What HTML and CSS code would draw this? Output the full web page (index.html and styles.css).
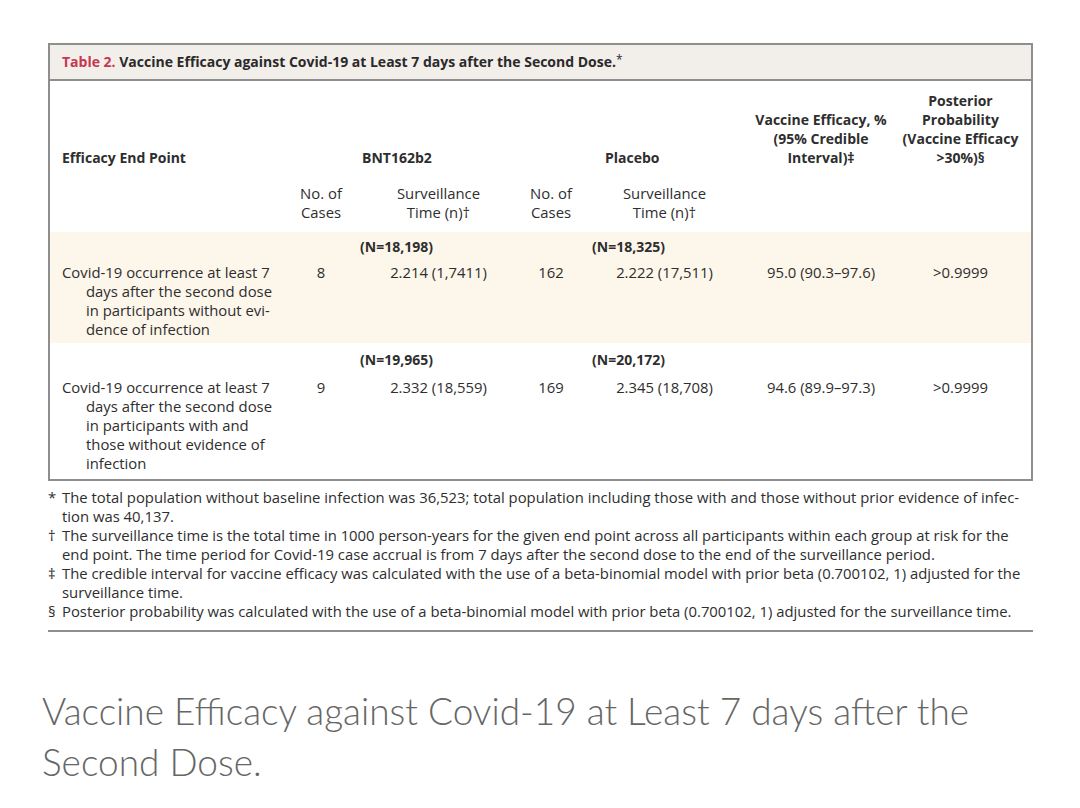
FILE: index.html
```html
<!DOCTYPE html>
<html>
<head>
<meta charset="utf-8">
<link rel="stylesheet" href="styles.css">
</head>
<body>
<div class="page">
  <div class="figure">
    <div class="title"><span class="label">Table 2.</span> Vaccine Efficacy against Covid-19 at Least 7 days after the Second Dose.<sup class="star">*</sup></div>
    <table class="data">
      <colgroup>
        <col class="c1"><col class="c2"><col class="c3"><col class="c4"><col class="c5"><col class="c6"><col class="c7">
      </colgroup>
      <thead>
        <tr class="h1">
          <th class="ep">Efficacy End Point</th>
          <th colspan="2" class="grp grp-b">BNT162b2</th>
          <th colspan="2" class="grp grp-p">Placebo</th>
          <th class="ctr">Vaccine Efficacy, %<br>(95% Credible<br>Interval)‡</th>
          <th class="ctr">Posterior<br>Probability<br>(Vaccine Efficacy<br>&gt;30%)§</th>
        </tr>
        <tr class="h2">
          <th></th>
          <th class="ctr">No. of<br>Cases</th>
          <th class="ctr">Surveillance<br>Time (n)†</th>
          <th class="ctr">No. of<br>Cases</th>
          <th class="ctr">Surveillance<br>Time (n)†</th>
          <th></th>
          <th></th>
        </tr>
      </thead>
      <tbody class="shaded first">
        <tr class="nrow">
          <td></td>
          <td colspan="2" class="n n-b">(N=18,198)</td>
          <td colspan="2" class="n n-p">(N=18,325)</td>
          <td></td><td></td>
        </tr>
        <tr class="drow">
          <td class="ep">Covid-19 occurrence at least 7<br>days after the second dose<br>in participants without evi-<br>dence of infection</td>
          <td class="ctr">8</td>
          <td class="ctr">2.214 (1,7411)</td>
          <td class="ctr">162</td>
          <td class="ctr">2.222 (17,511)</td>
          <td class="ctr">95.0 (90.3–97.6)</td>
          <td class="ctr">&gt;0.9999</td>
        </tr>
      </tbody>
      <tbody class="second">
        <tr class="nrow">
          <td></td>
          <td colspan="2" class="n n-b">(N=19,965)</td>
          <td colspan="2" class="n n-p">(N=20,172)</td>
          <td></td><td></td>
        </tr>
        <tr class="drow">
          <td class="ep">Covid-19 occurrence at least 7<br>days after the second dose<br>in participants with and<br>those without evidence of<br>infection</td>
          <td class="ctr">9</td>
          <td class="ctr">2.332 (18,559)</td>
          <td class="ctr">169</td>
          <td class="ctr">2.345 (18,708)</td>
          <td class="ctr">94.6 (89.9–97.3)</td>
          <td class="ctr">&gt;0.9999</td>
        </tr>
      </tbody>
    </table>
  </div>
  <div class="notes">
    <div class="note"><span class="mark">*</span><span class="ntext">The total population without baseline infection was 36,523; total population including those with and those without prior evidence of infec-<br>tion was 40,137.</span></div>
    <div class="note"><span class="mark">†</span><span class="ntext">The surveillance time is the total time in 1000 person-years for the given end point across all participants within each group at risk for the<br>end point. The time period for Covid-19 case accrual is from 7 days after the second dose to the end of the surveillance period.</span></div>
    <div class="note"><span class="mark">‡</span><span class="ntext">The credible interval for vaccine efficacy was calculated with the use of a beta-binomial model with prior beta (0.700102, 1) adjusted for the<br>surveillance time.</span></div>
    <div class="note"><span class="mark">§</span><span class="ntext">Posterior probability was calculated with the use of a beta-binomial model with prior beta (0.700102, 1) adjusted for the surveillance time.</span></div>
  </div>
  <p class="caption">Vaccine Efficacy against Covid-19 at Least 7 days after the<br>Second Dose.</p>
</div>
</body>
</html>
```
FILE: styles.css
```css
html, body {
  margin: 0;
  padding: 0;
  background: #ffffff;
}
.page {
  padding: 43px 0 0 48px;
  width: 985px;
  font-family: "Open Sans", "Lato", sans-serif;
  font-size: 14.85px;
  line-height: 19px;
  color: #2e2e2e;
}
.figure {
  border: 2px solid #8e8e8e;
}
.title {
  background: #f2eeea;
  border-bottom: 2px solid #8e8e8e;
  height: 34px;
  line-height: 34px;
  padding-left: 12px;
  font-size: 14px;
  font-weight: 700;
  color: #2a2a2a;
}
.title .label {
  color: #c5384f;
}
.title .star {
  font-size: 12px;
  line-height: 0;
  vertical-align: 3px;
  font-weight: 400;
}
.data {
  width: 100%;
  table-layout: fixed;
  border-collapse: collapse;
  border-spacing: 0;
}
.c1 { width: 240px; }
.c2 { width: 62px; }
.c3 { width: 173px; }
.c4 { width: 52px; }
.c5 { width: 175px; }
.c6 { width: 138px; }
.c7 { width: 141px; }
.data th, .data td {
  padding: 0;
  text-align: left;
  font-weight: 400;
  vertical-align: top;
}
.data .ctr { text-align: center; }
.data .ep { padding-left: 12px; }
.h1 th {
  font-size: 14px;
  font-weight: 700;
  vertical-align: bottom;
  padding-top: 10px;
  padding-bottom: 8px;
}
.h1 .grp-b { padding-left: 72px; }
.h1 .grp-p { padding-left: 80px; }
.h2 th {
  padding-top: 9px;
  padding-bottom: 10px;
}
.shaded {
  background: #fdf6ea;
}
.data .n {
  font-size: 14px;
  font-weight: 700;
}
.data .n-b { padding-left: 70px; }
.data .n-p { padding-left: 67px; }
.first .nrow td { padding-top: 5px; padding-bottom: 3px; }
.first .drow td { padding-top: 4px; padding-bottom: 4px; }
.second .nrow td { padding-top: 7px; padding-bottom: 4px; }
.second .drow td { padding-top: 5px; padding-bottom: 6px; }
.drow .ep {
  padding-left: 36px;
  text-indent: -24px;
}
.notes {
  padding: 7px 0 9px 0;
  border-bottom: 2px solid #8e8e8e;
}
.note {
  display: flex;
}
.mark {
  width: 14px;
  flex: none;
}
.ntext {
  flex: 1;
}
.caption {
  margin: 53px 0 0 -6px;
  font-family: "Lato", sans-serif;
  font-weight: 300;
  font-size: 37px;
  line-height: 51px;
  color: #666666;
  width: 1000px;
}
```
